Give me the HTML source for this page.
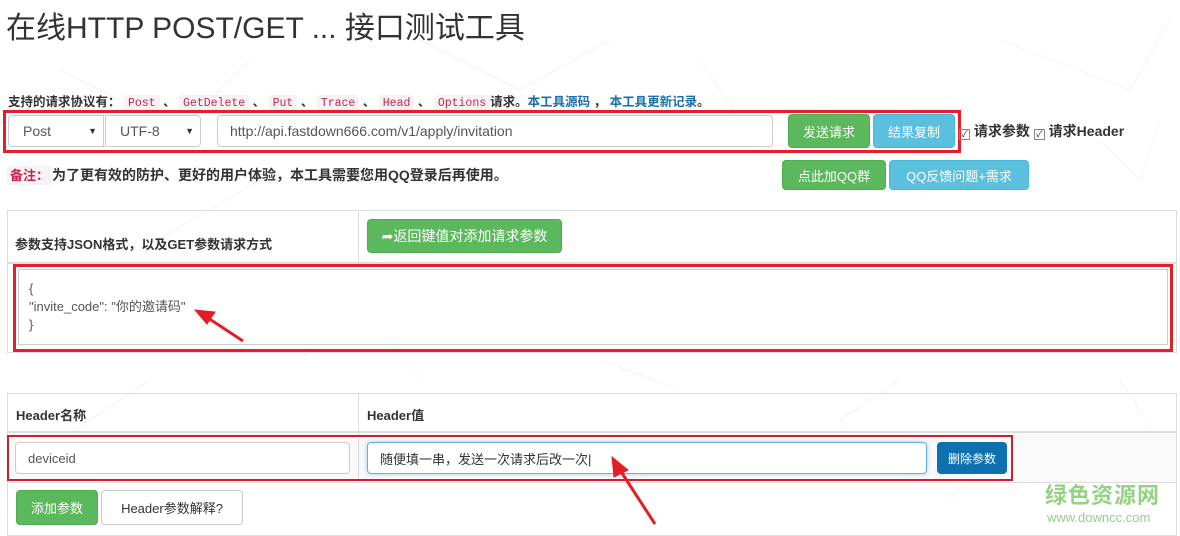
<!DOCTYPE html>
<html><head><meta charset="utf-8"><style>
*{box-sizing:border-box;margin:0;padding:0}
body{width:1180px;height:536px;overflow:hidden;background:#fff;font-family:"Liberation Sans","Noto Sans CJK SC",sans-serif;color:#333;position:relative;font-size:13px}
.a{position:absolute}
code{font-family:"Liberation Mono","Noto Sans CJK SC",monospace;color:#c7254e;background:#f9f2f4;padding:2px 4px;border-radius:3px;font-size:11.5px;font-weight:normal}
.btn{position:absolute;color:#fff;border-radius:4px;font-size:13px;display:flex;align-items:center;justify-content:center}
.g{background:#5cb85c;border:1px solid #4cae4c}
.b{background:#5bc0de;border:1px solid #46b8da}
.inp{position:absolute;background:#fff;border:1px solid #ccc;border-radius:4px;font-size:14px;color:#555;display:flex;align-items:center;padding-left:12px}
.red{position:absolute;border:3px solid #e0202a}
.cb{display:inline-block;width:11px;height:11px;border:1px solid #888;font-size:9px;line-height:9px;text-align:center;vertical-align:-1px;font-weight:normal}
</style></head><body>
<svg class="a" style="left:0;top:0" width="1180" height="536"><g stroke="#e4eef5" stroke-width="0.6" fill="none">
<path d="M60 70L180 130L250 60M400 30L520 90L610 40M700 60L760 150L900 120M1000 40L1130 90L1170 20M1100 140L1140 180L1160 120M950 500L1000 430L1060 470M880 470L840 420L900 380M300 360L360 300L420 380M150 380L60 440M1120 380L1160 440M600 360L680 390M260 180L140 250"/></g></svg>
<div class="a" style="left:6px;top:3px;font-size:30px;color:#333">在线HTTP POST/GET ... 接口测试工具</div>
<div class="a" style="left:8px;top:91px;font-size:12.5px;font-weight:bold;white-space:nowrap">支持的请求协议有： <code>Post</code> 、 <code>GetDelete</code> 、 <code>Put</code> 、 <code>Trace</code> 、 <code>Head</code> 、 <code>Options</code>请求。<span style="color:#1a6fa8">本工具源码</span> ， <span style="color:#1a6fa8">本工具更新记录</span>。</div>
<div class="red" style="left:3px;top:110px;width:958px;height:43px"></div>
<div class="inp" style="left:8px;top:115px;width:96px;height:32px;border-radius:4px 0 0 4px;padding-left:14px">Post<span style="position:absolute;right:6px;font-size:9px;color:#333">▼</span></div>
<div class="inp" style="left:105px;top:115px;width:96px;height:32px;border-radius:0 4px 4px 0;padding-left:14px">UTF-8<span style="position:absolute;right:6px;font-size:9px;color:#333">▼</span></div>
<div class="inp" style="left:217px;top:115px;width:556px;height:32px">http://api.fastdown666.com/v1/apply/invitation</div>
<div class="btn g" style="left:788px;top:114px;width:82px;height:34px">发送请求</div>
<div class="btn b" style="left:873px;top:114px;width:82px;height:34px">结果复制</div>
<div class="a" style="left:959px;top:121px;font-size:14px;font-weight:bold;white-space:nowrap"><span class="cb">✓</span> 请求参数 <span class="cb">✓</span> 请求Header</div>
<div class="a" style="left:7px;top:165px;font-size:14px;font-weight:bold;white-space:nowrap"><span style="color:#c7254e;background:#f9f2f4;padding:2px 3px;border-radius:3px;font-size:13px">备注：</span>为了更有效的防护、更好的用户体验，本工具需要您用QQ登录后再使用。</div>
<div class="btn g" style="left:782px;top:160px;width:104px;height:30px">点此加QQ群</div>
<div class="btn b" style="left:889px;top:160px;width:140px;height:30px">QQ反馈问题+需求</div>
<div class="a" style="left:7px;top:210px;width:1170px;height:143px;border:1px solid #ddd"></div>
<div class="a" style="left:7px;top:262px;width:1170px;height:2px;background:#ddd"></div>
<div class="a" style="left:358px;top:210px;width:1px;height:52px;background:#ddd"></div>
<div class="a" style="left:15px;top:234px;font-size:13px;font-weight:bold">参数支持JSON格式，以及GET参数请求方式</div>
<div class="btn g" style="left:367px;top:219px;width:195px;height:34px;font-size:14px">➦返回键值对添加请求参数</div>
<div class="red" style="left:13px;top:264px;width:1160px;height:88px"></div>
<div class="a" style="left:18px;top:269px;width:1150px;height:76px;border:1px solid #ccc;background:#fff;font-size:13px;color:#555;padding:10px 10px;line-height:18px">{<br>"invite_code": "你的邀请码"<br>}</div>
<div class="a" style="left:7px;top:393px;width:1170px;height:143px;border:1px solid #ddd"></div>
<div class="a" style="left:7px;top:431px;width:1170px;height:2px;background:#ddd"></div>
<div class="a" style="left:8px;top:433px;width:1168px;height:50px;background:#f9f9f9;border-bottom:1px solid #ddd"></div>
<div class="a" style="left:358px;top:393px;width:1px;height:90px;background:#ddd"></div>
<div class="a" style="left:16px;top:405px;font-size:13px;font-weight:bold">Header名称</div>
<div class="a" style="left:367px;top:405px;font-size:13px;font-weight:bold">Header值</div>
<div class="a" style="left:7px;top:435px;width:1006px;height:46px;border:2px solid #c9202a"></div>
<div class="inp" style="left:15px;top:442px;width:335px;height:32px;font-size:13px">deviceid</div>
<div class="inp" style="left:367px;top:442px;width:560px;height:32px;border-color:#66afe9;box-shadow:0 0 4px rgba(102,175,233,.6);font-size:13px;color:#333">随便填一串，发送一次请求后改一次|</div>
<div class="btn" style="left:937px;top:442px;width:70px;height:32px;background:#0f70b0;font-size:12px">删除参数</div>
<div class="btn g" style="left:16px;top:490px;width:82px;height:35px">添加参数</div>
<div class="btn" style="left:101px;top:490px;width:142px;height:35px;background:#fff;border:1px solid #ccc;color:#333">Header参数解释?</div>
<div class="a" style="left:1045px;top:483px;font-size:22px;font-weight:bold;color:#94d283;letter-spacing:1px;line-height:26px">绿色资源网</div>
<div class="a" style="left:1047px;top:510px;font-size:13px;color:#94d283;line-height:16px">www.downcc.com</div>
<svg class="a" style="left:0;top:0" width="1180" height="536"><g fill="#e41e26" stroke="#e41e26">
<line x1="243" y1="341" x2="205" y2="316" stroke-width="3"/><polygon points="195,310 215,312 207,324"/>
<line x1="655" y1="524" x2="620" y2="470" stroke-width="3"/><polygon points="612,457 628,470 614,477"/>
</g></svg>
</body></html>
